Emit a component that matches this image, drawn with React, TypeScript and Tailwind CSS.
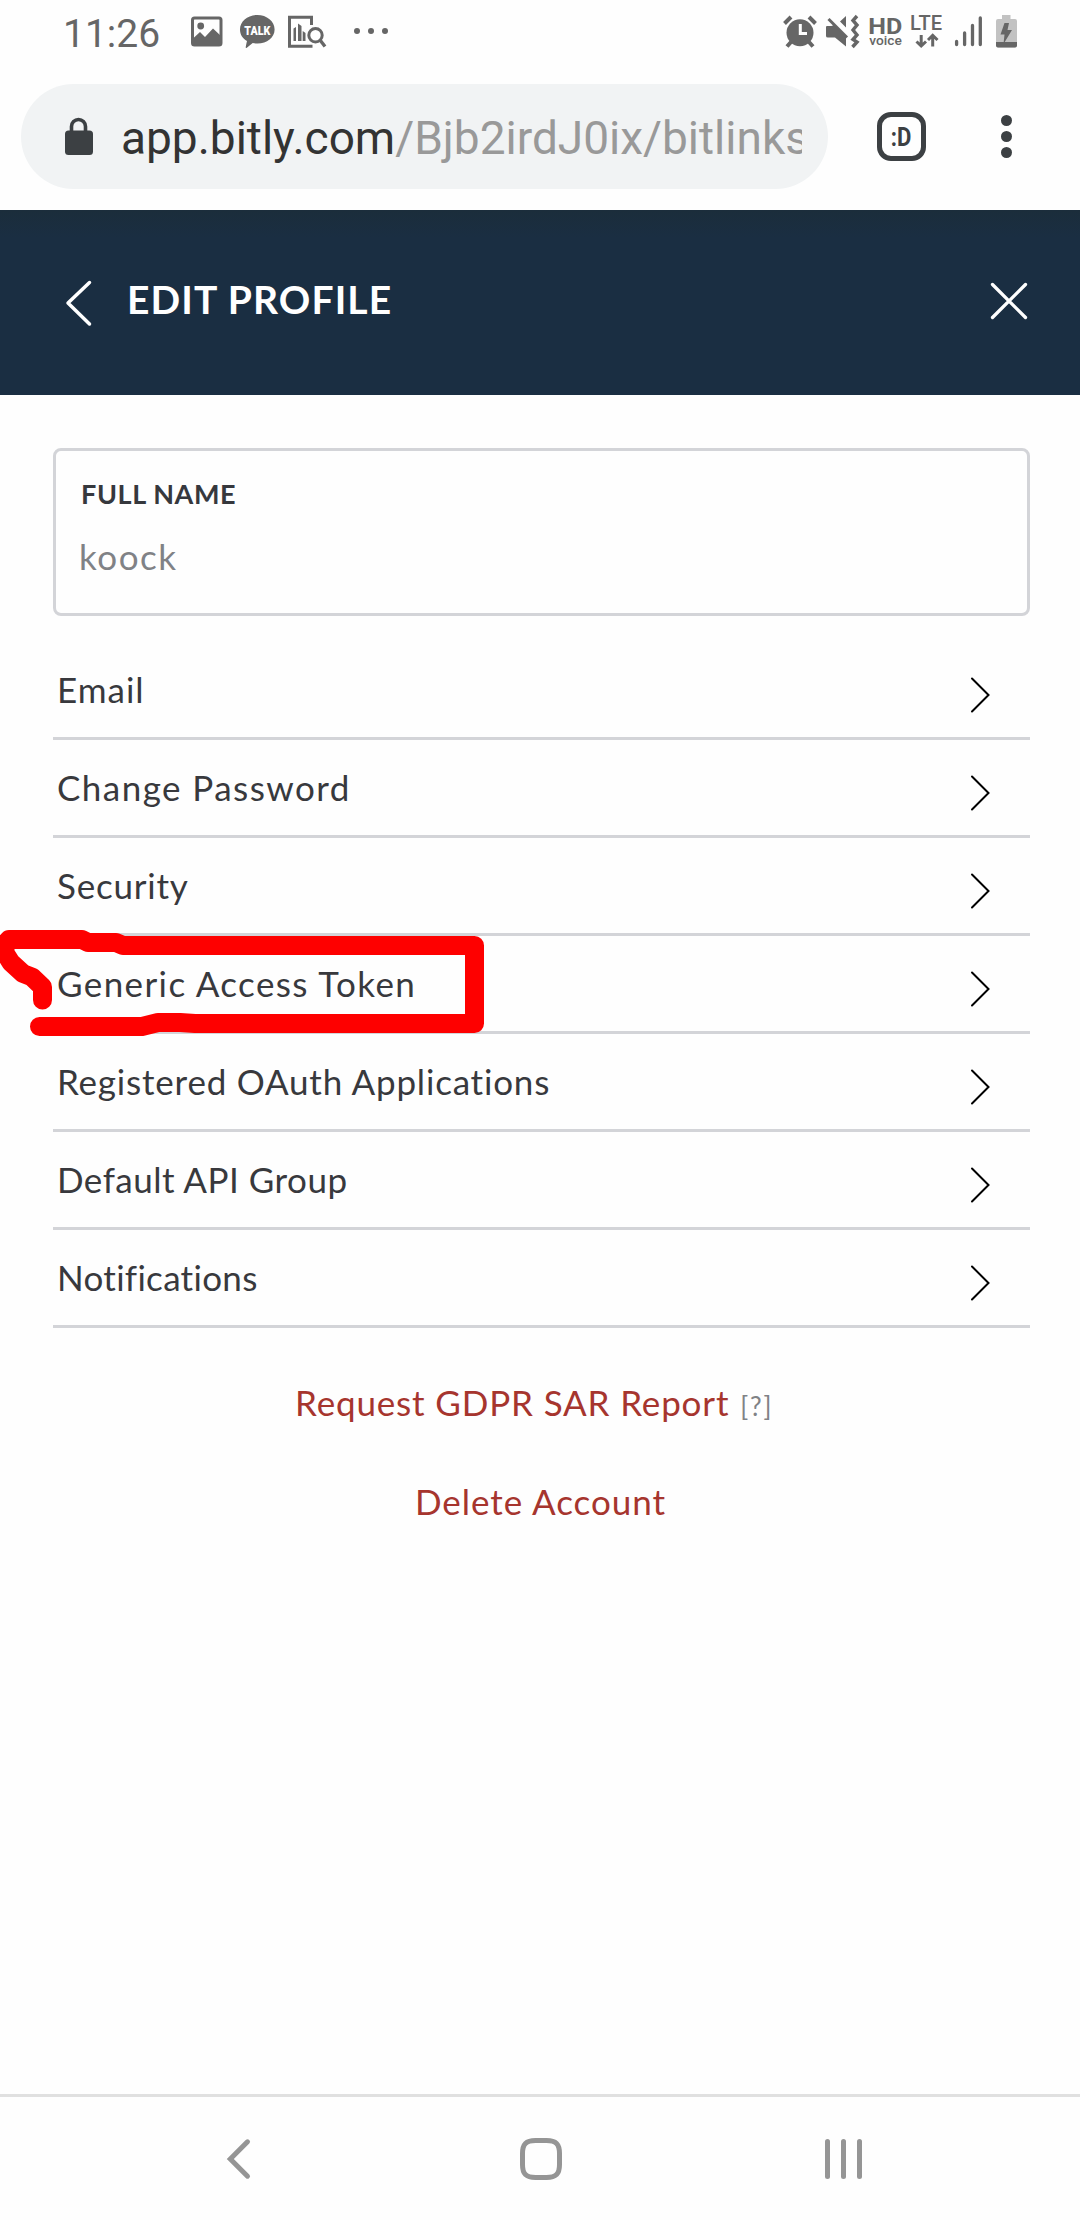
import React from "react";

function StatusBar() {
  return (
    <div className="flex h-[84px] w-full items-start">
      <div className="ml-[63px] mt-[9px] w-[110px] whitespace-nowrap font-[Roboto] text-[39px] leading-[50px] text-[#666]">11:26</div>
      <svg className="ml-[18px] mt-[15px]" width="34" height="34" viewBox="191 15 34 34">
        <rect x="192.5" y="18" width="28.5" height="27" rx="2" fill="none" stroke="#666" strokeWidth="3" />
        <circle cx="200.7" cy="26" r="3.4" fill="#666" />
        <path d="M193 38.5 L200 32 L205 37 L213 28.5 L221 36 V45 H193 Z" fill="#666" />
      </svg>
      <svg className="ml-[13px] mt-[13px]" width="39" height="37" viewBox="238 13 39 37">
        <path d="M257.300 15 C266.800 15 274.600 21.300 274.600 29.500 C274.600 37.500 267 43.500 257.500 43.500 C255.800 43.500 254.200 43.300 252.700 43 L246.500 48 C245.300 48.600 245.600 47 247 41 C242.500 38.500 240 34.500 240 29.500 C240 21.300 247.800 15 257.300 15 Z" fill="#666" />
        <text x="257.300" y="34.800" textAnchor="middle" fontFamily="Roboto" fontWeight="900" fontSize="12" textLength="26" lengthAdjust="spacingAndGlyphs" fill="#fff">TALK</text>
      </svg>
      <svg className="ml-[10px] mt-[13px]" width="40" height="37" viewBox="287 13 40 37">
        <path d="M311.500 25 V17.200 H289.500 V46.300 H312.500" fill="none" stroke="#666" strokeWidth="3" />
        <path d="M293.500 41 V28.500 L296 27 V41 Z M298 41 V23.500 L301.500 26 V41 Z M302.700 41 V31 L305.500 33 V41 Z" fill="#666" />
        <circle cx="315.500" cy="35.300" r="6.700" fill="#fff" stroke="#666" strokeWidth="3" />
        <path d="M320 40 L325 46.500" stroke="#666" strokeWidth="3.400" />
      </svg>
      <div className="ml-[27px] mt-[28px] flex gap-[8px]">
        <i className="size-[6px] rounded-full bg-[#666]" />
        <i className="size-[6px] rounded-full bg-[#666]" />
        <i className="size-[6px] rounded-full bg-[#666]" />
      </div>
      <svg className="ml-auto mr-[62px] mt-[10px]" width="238" height="42" viewBox="780 10 238 42">
        <circle cx="800" cy="32.800" r="13.500" fill="#666" />
        <g fill="none" stroke="#666">
          <path d="M784.500 23.500 L791 17 M815.500 23.500 L809 17" strokeWidth="4" />
          <path d="M791 42 L787 46.500 M809 42 L813 46.500" strokeWidth="4" />
          <path d="M800.300 24 V33.500 H807" stroke="#fff" strokeWidth="3" />
        </g>
        <path d="M826 27 Q826 26 827 26 H831.500 L834 25 L846 37 V46.500 L835 37.500 H828 Q826 37.500 826 36 Z M840 21.500 L846 16 V27.500 Z" fill="#666" />
        <path d="M828.500 19 L847 37.500" stroke="#666" strokeWidth="3" />
        <path d="M857 16 L853 20.500 L857 25 L853 30 L857 35 L853 39.500 L857 42 L852.500 47" fill="none" stroke="#666" strokeWidth="3.400" />
        <text x="868.300" y="34" fontFamily="Roboto" fontWeight="700" fontSize="22" textLength="34" lengthAdjust="spacingAndGlyphs" fill="#666">HD</text>
        <text x="869.300" y="44.700" fontFamily="Roboto" fontWeight="500" fontSize="13" textLength="32.500" lengthAdjust="spacingAndGlyphs" fill="#666">voice</text>
        <text x="910" y="29.500" fontFamily="Roboto" fontWeight="500" fontSize="19.500" textLength="32" lengthAdjust="spacingAndGlyphs" fill="#666">LTE</text>
        <path d="M921.200 35 V46 M916.500 41.500 L921.200 46 L926 41.500 M932.700 46.500 V35.500 M928 40 L932.700 35.300 L937.500 40" fill="none" stroke="#666" strokeWidth="3" />
        <path d="M956.600 41.500 V44.500 M964.600 33 V44.500 M972.500 25.500 V44.500 M980.300 18 V44.500" stroke="#666" strokeWidth="3.300" strokeLinecap="round" />
        <path d="M1002 15 H1010.500 V19 H1015 Q1017 19 1017 21 V45.500 Q1017 47.500 1015 47.500 H998 Q996 47.500 996 45.500 V21 Q996 19 998 19 H1002 Z" fill="#c2c2c2" />
        <path d="M996 42 H1017 V45.500 Q1017 47.500 1015 47.500 H998 Q996 47.500 996 45.500 Z" fill="#666" />
        <path d="M1004.500 23 H1009 L1007.500 30 H1012 L1003.500 44 L1004.500 34.500 H1000.500 Z" fill="#666" />
      </svg>
    </div>
  );
}

function AddressBar() {
  return (
    <div className="flex h-[126px] items-start">
      <div className="ml-[21px] flex h-[105px] w-[807px] items-center rounded-full bg-[#f1f3f4] pl-[43px]">
        <svg className="mb-[2px]" width="30" height="40" viewBox="64 115 30 40">
          <rect x="65" y="129.500" width="28" height="24.500" rx="3.500" fill="#3c4043" />
          <path d="M71.500 131 V125.500 A7 7 0 0 1 85.500 125.500 V131" fill="none" stroke="#3c4043" strokeWidth="3.600" />
        </svg>
        <div className="ml-[27px] mt-[2px] w-[681px] overflow-hidden whitespace-nowrap font-[Roboto] text-[46px] leading-[60px] text-[#999]">
          <span className="text-[#333]">app.bitly.com</span>
          <span>/Bjb2irdJ0ix/bitlinks</span>
        </div>
      </div>
      <div className="ml-[49px] mt-[28px] flex size-[49px] items-center justify-center rounded-[14px] border-[5px] border-[#3c4043] font-[Roboto] text-[26px] font-bold leading-none text-[#3c4043]">
        <span className="scale-x-[0.85]">:D</span>
      </div>
      <div className="ml-[75px] mt-[31px] flex flex-col gap-[5px]">
        <i className="size-[11px] rounded-full bg-[#3c4043]" />
        <i className="size-[11px] rounded-full bg-[#3c4043]" />
        <i className="size-[11px] rounded-full bg-[#3c4043]" />
      </div>
    </div>
  );
}

const rows = [
  { label: "Email", tracking: "tracking-[1px]" },
  { label: "Change Password", tracking: "tracking-[1.45px]" },
  { label: "Security", tracking: "tracking-[0.8px]" },
  { label: "Generic Access Token", tracking: "tracking-[1.4px]" },
  { label: "Registered OAuth Applications", tracking: "tracking-[0.8px]" },
  { label: "Default API Group", tracking: "tracking-[0.5px]" },
  { label: "Notifications", tracking: "tracking-[0.3px]" },
];

/* Hand-drawn red marker around the "Generic Access Token" row. */
function Marker() {
  return (
    <svg className="pointer-events-none absolute left-0 top-[920px]" width="500" height="125" viewBox="0 920 500 125">
      <path
        d="M42.500 1000 L42.500 987 L32 977 L23 973.500 L11 962.500 L5 953 L5 944 L9 939.500 H82 L88 942.500 H116 L123 945.500 H474.500 V1023.500 H195 L180 1022.500 H158 L142 1026.500 H39.500"
        fill="none"
        stroke="#fe0000"
        strokeWidth="19"
        strokeLinecap="round"
        strokeLinejoin="round"
      />
    </svg>
  );
}

function NavBar() {
  return (
    <nav className="mt-auto flex h-[126px] shrink-0 items-start border-t-[3px] border-[#e0e0e0] pl-[226px] pt-[41px]">
      <svg width="26" height="42" viewBox="0 0 26 42">
        <path d="M21.500 3.800 L4.300 21 L21.500 38.200" fill="none" stroke="#959595" strokeWidth="5" strokeLinecap="round" />
      </svg>
      <svg className="ml-[267px]" width="44" height="42" viewBox="0 0 44 42">
        <path d="M22 2.500 H27.500 C37 2.500 40.500 6 40.500 15.500 V26.500 C40.500 36 37 39.500 27.500 39.500 H16.500 C7 39.500 3.500 36 3.500 26.500 V15.500 C3.500 6 7 2.500 16.500 2.500 Z" fill="none" stroke="#959595" strokeWidth="5" />
      </svg>
      <div className="ml-[262px] mt-px flex gap-[11px]">
        <i className="h-[40px] w-[5px] rounded-full bg-[#959595]" />
        <i className="h-[40px] w-[5px] rounded-full bg-[#959595]" />
        <i className="h-[40px] w-[5px] rounded-full bg-[#959595]" />
      </div>
    </nav>
  );
}

export default function App() {
  return (
    <div className="relative flex h-[2220px] w-[1080px] flex-col overflow-hidden bg-[#fefefe] font-[Lato,sans-serif] [font-variant-ligatures:none]">
      <StatusBar />
      <AddressBar />
      <header className="flex h-[185px] items-center bg-[#1a2e42] bg-linear-to-b from-[#1b2d3b] to-[#1a2e42] to-15% text-white">
        <svg className="ml-[64px]" width="30" height="50" viewBox="0 0 30 50">
          <path d="M25.500 4.500 L4 25 L25.500 46" fill="none" stroke="#fff" strokeWidth="3.500" strokeLinecap="round" strokeLinejoin="round" />
        </svg>
        <h1 className="mb-[7px] ml-[33px] whitespace-nowrap text-[39px] font-bold leading-[50px] tracking-[1.1px]">EDIT PROFILE</h1>
        <svg className="mb-[3px] ml-auto mr-[51px]" width="40" height="40" viewBox="989 281 40 40">
          <path d="M992.500 284.500 L1025.500 317.500 M1025.500 284.500 L992.500 317.500" stroke="#fff" strokeWidth="3.300" strokeLinecap="round" />
        </svg>
      </header>
      <main className="ml-[53px] mt-[53px] w-[977px]">
        <section className="h-[168px] rounded-[8px] border-[3px] border-[#d3d4d8] pt-[23px]">
          <div className="pl-[25px] text-[27px] font-bold leading-[40px] tracking-[0.6px] text-[#36383d]">FULL NAME</div>
          <div className="mt-[20px] pl-[23px] text-[35px] leading-[44px] tracking-[1.5px] text-[#808286]">koock</div>
        </section>
        <ul className="mt-[26px]">
          {rows.map(({ label, tracking }) => (
            <li key={label} className="flex h-[98px] items-center justify-between border-b-[3px] border-[#d3d4d8] pb-[2px] pl-[4px] pr-[40px] text-[35px] leading-[44px] text-[#38393d]">
              <span className={tracking}>{label}</span>
              <svg className="mt-[12px]" width="20" height="36" viewBox="0 0 20 36">
                <path d="M2 1.500 L18.500 18 L2 34.500" fill="none" stroke="#000" strokeWidth="2" strokeLinecap="round" />
              </svg>
            </li>
          ))}
        </ul>
        <div className="ml-[242px] mt-[52px] flex items-baseline whitespace-nowrap text-[35px] leading-[44px] text-[#a6352e]">
          <span className="tracking-[0.85px]">Request GDPR SAR Report</span>
          <span className="ml-[11px] text-[26px] leading-none tracking-[1.8px] text-[#808286]">[?]</span>
        </div>
        <div className="ml-[362px] mt-[55px] text-[35px] leading-[44px] tracking-[0.97px] text-[#a6352e]">Delete Account</div>
      </main>
      <Marker />
      <NavBar />
    </div>
  );
}
